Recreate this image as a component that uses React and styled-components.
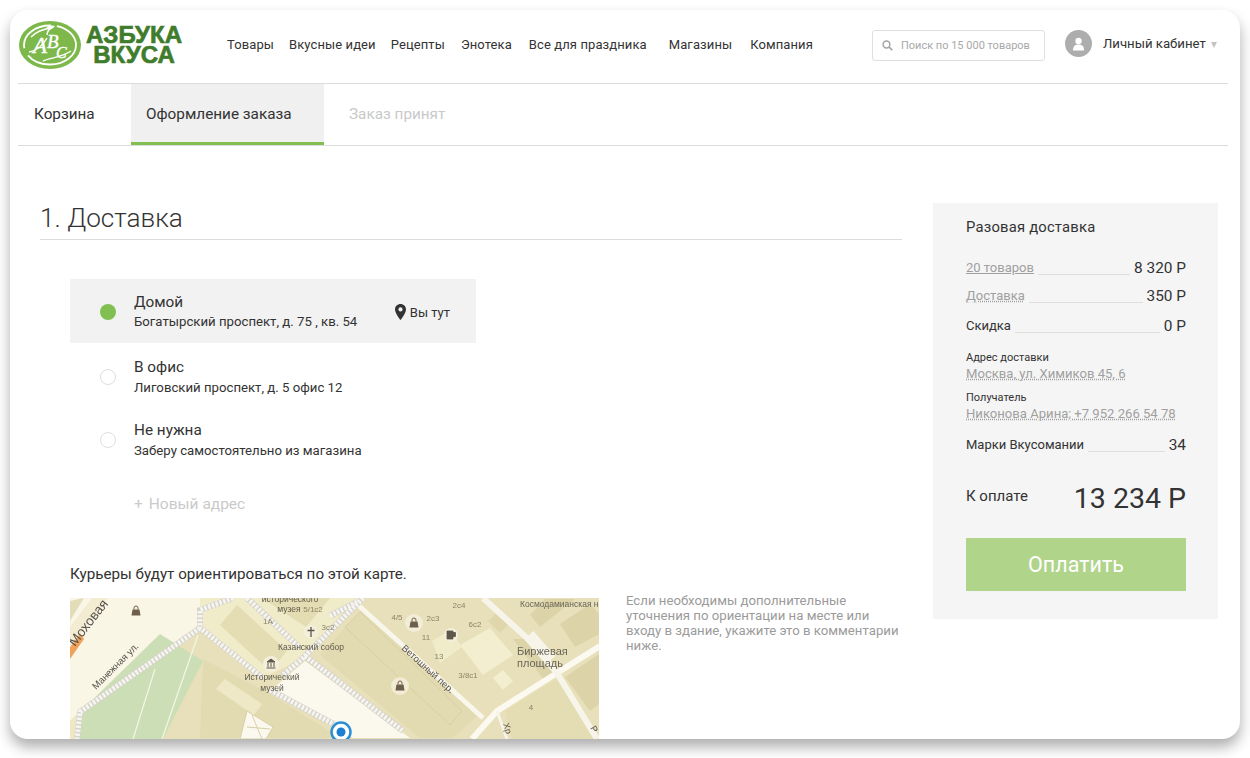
import React from 'react';
import styled, { createGlobalStyle } from 'styled-components';

const Global = createGlobalStyle`
	html, body {
		margin: 0;
		height: 100%;
		overflow: hidden;
		background: #fff;
	}
	body {
		font-family: Roboto, "Liberation Sans", sans-serif;
		color: #333;
	}
	#root {
		padding: 10px 10px 0;
	}
`;

const Window = styled.div`
	height: 729px;
	overflow: hidden;
	padding: 0 12px 0 8px;
	box-sizing: border-box;
	background: #fff;
	border-radius: 18px;
	box-shadow: 0 8px 14px rgba(0, 0, 0, 0.32);
`;

const Header = styled.header`
	display: flex;
	align-items: center;
	box-sizing: border-box;
	height: 74px;
	padding-bottom: 6px;
	border-bottom: 1px solid #dcdcdc;
`;

const Logo = styled.div`
	display: flex;
	flex: none;
	align-items: center;
	width: 208px;
	margin: 2px 0 0 1px;
`;

const Wordmark = styled.div`
	margin: 1px 0 0 4px;
	width: 98px;
	text-align: center;
	font-family: "Liberation Sans", sans-serif;
	font-weight: 700;
	font-size: 24px;
	line-height: 20px;
	color: #3f7d2c;
	-webkit-text-stroke: 0.7px #3f7d2c;
`;

const Nav = styled.nav`
	display: flex;
	flex: none;
	padding-top: 1px;
	font-size: 13px;
	letter-spacing: 0.1px;
	color: #333;
`;

const NavItem = styled.a`
	margin-right: ${props => props.$gap}px;
	white-space: nowrap;
`;

const Search = styled.div`
	display: flex;
	flex: none;
	align-items: center;
	width: 173px;
	height: 31px;
	margin: 3px 0 0 59px;
	padding-left: 9px;
	box-sizing: border-box;
	border: 1px solid #dfdfdf;
	border-radius: 3px;
	color: #a8a8a8;
	font-size: 11px;
	white-space: nowrap;
	svg {
		margin-right: 8px;
		flex: none;
	}
`;

const Account = styled.div`
	display: flex;
	flex: none;
	align-items: center;
	margin-left: 20px;
	font-size: 13.2px;
	white-space: nowrap;
`;

const Avatar = styled.span`
	display: flex;
	width: 27px;
	height: 27px;
	margin-right: 11px;
	border-radius: 50%;
	background: #adadad;
	align-items: center;
	justify-content: center;
`;

const Caret = styled.span`
	width: 0;
	height: 0;
	margin: 2px 0 0 5px;
	border-left: 3px solid transparent;
	border-right: 3px solid transparent;
	border-top: 6px solid #c4c4c4;
`;

const Tabs = styled.div`
	display: flex;
	height: 61px;
	border-bottom: 1px solid #dcdcdc;
`;

const Tab = styled.div`
	display: flex;
	align-items: center;
	box-sizing: border-box;
	height: 61px;
	width: ${props => props.$width}px;
	padding: 2px 0 0 ${props => props.$pad}px;
	font-size: 15.3px;
	color: ${props => (props.$muted ? '#c9c9c9' : '#333')};
	background: ${props => (props.$active ? '#f0f0f0' : 'transparent')};
	border-bottom: 3px solid ${props => (props.$active ? '#82bf52' : 'transparent')};
`;

const Main = styled.main`
	display: flex;
	align-items: flex-start;
	padding: 57px 0 0 22px;
`;

const Content = styled.section`
	width: 862px;
`;

const Title = styled.h1`
	height: 36px;
	margin: 0;
	border-bottom: 1px solid #dcdcdc;
	font-weight: 300;
	font-size: 26.2px;
	line-height: 30px;
	color: #333;
`;

const Addresses = styled.div`
	width: 406px;
	margin: 39px 0 0 30px;
`;

const AddressRow = styled.div`
	display: flex;
	align-items: center;
	box-sizing: border-box;
	height: ${props => props.$height}px;
	padding: 0 26px 0 30px;
	background: ${props => (props.$active ? '#f2f2f2' : 'transparent')};
`;

const Radio = styled.span`
	flex: none;
	box-sizing: border-box;
	width: 16px;
	height: 16px;
	margin: 2px 18px 0 0;
	border-radius: 50%;
	background: ${props => (props.$on ? '#82bf52' : '#fff')};
	border: ${props => (props.$on ? '0' : '1.5px solid #dedede')};
`;

const AddressText = styled.div`
	flex: 1;
	padding-top: ${props => props.$top}px;
`;

const AddressName = styled.div`
	font-size: 15.3px;
	line-height: 18px;
`;

const AddressLine = styled.div`
	font-size: 13.2px;
	line-height: 18px;
	margin-top: ${props => props.$gap}px;
`;

const YouHere = styled.div`
	display: flex;
	align-items: center;
	margin-top: 3px;
	font-size: 13px;
	svg {
		margin: -2px 4px 0 0;
	}
`;

const NewAddress = styled.div`
	margin: 25px 0 0 94px;
	font-size: 15.5px;
	line-height: 18px;
	color: #cacaca;
	span {
		margin-right: 6px;
	}
`;

const MapCaption = styled.p`
	margin: 52px 0 0 30px;
	font-size: 15.2px;
	line-height: 18px;
`;

const MapRow = styled.div`
	display: flex;
	margin: 15px 0 0 30px;
`;

const MapFrame = styled.div`
	flex: none;
	width: 529px;
	height: 160px;
	overflow: hidden;
	svg {
		display: block;
		filter: blur(0.5px);
	}
`;

const MapNote = styled.p`
	width: 276px;
	margin: -5px 0 0 27px;
	font-size: 13.2px;
	line-height: 15px;
	color: #9b9b9b;
`;

const Summary = styled.aside`
	flex: none;
	box-sizing: border-box;
	width: 285px;
	height: 416px;
	margin-left: 31px;
	padding: 15px 32px 0 33px;
	background: #f5f5f5;
`;

const SummaryTitle = styled.div`
	font-size: 14.8px;
	line-height: 18px;
	letter-spacing: 0.2px;
`;

const Line = styled.div`
	display: flex;
	align-items: flex-end;
	height: 18px;
	margin-top: ${props => props.$top}px;
`;

const LineLabel = styled.span`
	font-size: 13px;
	line-height: 18px;
	white-space: nowrap;
	color: ${props => (props.$link ? '#a0a0a0' : '#333')};
	text-decoration: ${props => (props.$link ? 'underline' : 'none')};
	text-decoration-style: ${props => props.$link || 'solid'};
`;

const Leader = styled.span`
	flex: 1;
	margin: 0 4px 2px 4px;
	border-bottom: 1px solid #dedede;
`;

const LineValue = styled.span`
	font-size: 15.4px;
	line-height: 18px;
	white-space: nowrap;
`;

const InfoLabel = styled.div`
	margin-top: ${props => props.$top}px;
	font-size: 11px;
	line-height: 14px;
`;

const InfoValue = styled.div`
	margin-top: 1px;
	font-size: 13.1px;
	line-height: 15px;
	color: #a0a0a0;
	white-space: nowrap;
	text-decoration: underline dotted;
`;

const Total = styled.div`
	display: flex;
	align-items: center;
	justify-content: space-between;
	height: 36px;
	margin-top: 27px;
`;

const TotalLabel = styled.span`
	font-size: 15px;
	margin-top: -7px;
`;

const TotalValue = styled.span`
	font-size: 28.5px;
	line-height: 36px;
`;

const PayButton = styled.button`
	display: block;
	width: 220px;
	height: 53px;
	margin-top: 21px;
	padding: 0;
	border: 0;
	background: #b0d48a;
	color: #fff;
	font: inherit;
	font-size: 21.5px;
`;

const LogoMark = () => (
	<svg width="62" height="48" viewBox="0 0 62 48">
		<ellipse cx="31" cy="24" rx="31" ry="24" fill="#7cb84a" />
		<ellipse cx="31" cy="24" rx="26" ry="19.5" fill="none" stroke="#fff" strokeWidth="1.8" strokeDasharray="60 8 40 6" />
		<path d="M10 31c8-1 14-7 18-14M34 6c-4 2-6 5-6 8M24 40c6-3 20-4 28-10M12 16c6-6 12-8 20-9" fill="none" stroke="#fff" strokeWidth="1.4" />
		<path d="M27 7c3-3 6-3 9-2-2 3-5 4-9 2z" fill="#fff" />
		<text x="14" y="32" fill="#fff" stroke="#fff" strokeWidth="0.4" fontFamily="Liberation Serif" fontStyle="italic" fontSize="23">А</text>
		<text x="28" y="27" fill="#fff" stroke="#fff" strokeWidth="0.4" fontFamily="Liberation Serif" fontStyle="italic" fontSize="19">В</text>
		<text x="37" y="37" fill="#fff" stroke="#fff" strokeWidth="0.4" fontFamily="Liberation Serif" fontStyle="italic" fontSize="16">С</text>
	</svg>
);

const SearchIcon = () => (
	<svg width="11" height="11" viewBox="0 0 11 11">
		<circle cx="4.5" cy="4.5" r="3.4" fill="none" stroke="#a5a5a5" strokeWidth="1.5" />
		<path d="M7 7l3.2 3.2" stroke="#a5a5a5" strokeWidth="1.7" />
	</svg>
);

const UserIcon = () => (
	<svg width="13" height="14" viewBox="0 0 13 14">
		<circle cx="6.5" cy="4" r="3.2" fill="#fff" />
		<path d="M1 13.5c0-4 1.500-6 5.500-6s5.500 2 5.500 6z" fill="#fff" />
	</svg>
);

const PinIcon = () => (
	<svg width="11" height="16" viewBox="0 0 11 16">
		<path d="M5.500 0C2.400 0 0 2.400 0 5.400 0 9 5.500 16 5.500 16S11 9 11 5.400C11 2.400 8.600 0 5.500 0zm0 7.500a2.100 2.100 0 1 1 0-4.200 2.100 2.100 0 0 1 0 4.200z" fill="#333" />
	</svg>
);

const Bag = ({ x, y, halo }) => (
	<g transform={`translate(${x} ${y})`}>
		{halo && <circle r="9" fill="#f4efdc" opacity="0.85" />}
		<path d="M-4.500 4.500l1-6h7l1 6z" fill="#6e5f4b" />
		<path d="M-2-1.500v-1.500a2 2 0 0 1 4 0v1.500" fill="none" stroke="#6e5f4b" strokeWidth="1" />
	</g>
);

const HOUSE_NUMBERS = [
	['5/1с2', 313, 613],
	['1А', 268, 625],
	['3с2', 328, 631],
	['4/5', 397, 621],
	['2с3', 433, 622],
	['2с4', 459, 609],
	['6с2', 475, 628],
	['11', 426, 641],
	['13', 439, 660],
	['3/8с1', 468, 679],
	['4', 531, 711],
];

const PEDESTRIAN_PATHS = [
	'M233 599L200 611V629L263 679',
	'M200 629L80 713L77 740',
	'M247 599L300 649',
	'M363 599L303 659L282 677',
	'M270 691L337 727',
	'M305 657L403 732',
	'M330 617L357 603',
];

// viewBox is in page pixels so features can be read straight off the reference
const CityMap = () => (
	<svg width="529" height="160" viewBox="70 599 529 160" fontFamily="Liberation Sans, sans-serif">
		<rect x="70" y="599" width="529" height="160" fill="#e7e0ba" />
		{/* ground west of the square */}
		<path d="M70 599H200V629L80 713L70 722Z" fill="#f9f6e6" />
		<path d="M70 722L80 713L77 740H70Z" fill="#efe8c4" />
		<path d="M70 660L84 640L80 634L70 648Z" fill="#f0a25a" />
		<path d="M70 648L108 599H92L70 628Z" fill="#f3ecd2" />
		<path d="M70 602L84 599L70 622Z" fill="#e3dcb8" />
		{/* museum ground and building */}
		<path d="M200 599H310L363 599L303 659L263 679L200 629Z" fill="#f0ebc9" />
		<path d="M220 626L237 606L287 652L270 672Z" fill="#e4dcb2" />
		<path d="M262 599H330L306 628Z" fill="#e4dcb2" />
		{/* park */}
		<path d="M160 635L203 662L163 740H77L80 713Z" fill="#cbdeb6" />
		<path d="M155 670L133 740M198 636L162 740" stroke="#f4f6e8" strokeWidth="1.2" fill="none" />
		{/* block around the star court */}
		<path d="M203 660L270 695L340 739H200Z" fill="#e2dab0" />
		<path d="M216 690L225 680L262 705L254 716Z" fill="#eee8c6" />
		<path d="M247 712L273 728L266 740H240Z" fill="#fbf9ef" stroke="#d8cfa6" />
		<path d="M252 716L262 740M247 728L270 730" stroke="#d8cfa6" fill="none" />
		{/* cream square */}
		<path d="M305 662L410 739H353L270 692Z" fill="#fbf9ee" />
		{/* large block */}
		<path d="M320 656L363 609L477 717L453 739H420Z" fill="#e2dab0" />
		<path d="M345 628L360 613L462 712L450 726Z" fill="none" stroke="#d8cfa6" />
		{/* squares north of Vetoshny */}
		<path d="M460 646L490 629L513 656L483 676Z" fill="#f3eecf" />
		<path d="M432 642L450 631L462 648L440 664Z" fill="#f0ebc8" />
		<path d="M493 679L503 671L513 682L503 691Z" fill="#f3eecf" />
		<path d="M488 622L498 612L510 624L500 634Z" fill="#dfd7ab" />
		<path d="M513 640L525 640L560 672L545 682Z" fill="#dcd4a8" />
		<path d="M545 600H575L540 628L530 616Z" fill="#dcd4a8" />
		<path d="M560 625L590 605L599 615V635L575 648Z" fill="#dcd4a8" />
		<path d="M565 678L599 655V705L590 712Z" fill="#dcd4a8" />
		<path d="M505 712L556 680L595 740H512Z" fill="#e4dcb3" />
		{/* streets */}
		<path d="M357 605L483 719" stroke="#f9f7ec" strokeWidth="5" fill="none" />
		<path d="M472 740L497 712L557 674L600 647" stroke="#fbf9f0" strokeWidth="6" fill="none" />
		<path d="M483 599L527 639L557 674L597 740" stroke="#f7f5ea" strokeWidth="6" fill="none" />
		<path d="M497 712L507 740" stroke="#f7f5ea" strokeWidth="3" fill="none" />
		<path d="M530 635L552 660" stroke="#f7f5ea" strokeWidth="9" fill="none" />
		{/* pedestrian zones */}
		<g fill="none" stroke="#d6d3c8" strokeWidth="6">
			{PEDESTRIAN_PATHS.map(d => <path key={d} d={d} />)}
		</g>
		<g fill="none" stroke="#f6f5f2" strokeWidth="5" strokeDasharray="2.500 1.500">
			{PEDESTRIAN_PATHS.map(d => <path key={d} d={d} />)}
		</g>
		<Bag x={136} y={612} />
		<Bag x={414} y={624} halo />
		<Bag x={400} y={687} halo />
		<circle cx="311" cy="633" r="7" fill="#f4efdc" />
		<path d="M311 628v10M307.500 631.500h7" stroke="#5e5648" strokeWidth="1.3" />
		<circle cx="271" cy="665" r="8" fill="#f4efdc" />
		<path d="M267 663h8l-4-3zM268 664v4M271 664v4M274 664v4M266.500 669h9" stroke="#5e5648" strokeWidth="1" fill="#5e5648" />
		<circle cx="451" cy="636" r="7" fill="#f4efdc" />
		<path d="M447 632h6v8h-6zM453 633.500h2.500v4h-2.500" fill="#5e5648" stroke="#5e5648" strokeWidth="0.8" />
		<g fill="#8a8468" fontSize="8" textAnchor="middle">
			{HOUSE_NUMBERS.map(([label, x, y]) => (
				<text key={label} x={x} y={y}>{label}</text>
			))}
		</g>
		<g fill="#5f5a4c" fontSize="8.500" textAnchor="middle">
			<text x="290" y="603">исторического</text>
			<text x="289" y="613">музея</text>
			<text x="272" y="681">Исторический</text>
			<text x="272" y="692">музей</text>
			<text x="311" y="651">Казанский собор</text>
		</g>
		<text x="75" y="648" transform="rotate(-52 75 648)" fill="#55504a" fontSize="13.5">Моховая</text>
		<text x="96" y="691" transform="rotate(-45 96 691)" fill="#55504a" fontSize="9.5">Манежная ул.</text>
		<text x="401" y="650" transform="rotate(42 401 650)" fill="#55504a" fontSize="9.500">Ветошный пер.</text>
		<text x="517" y="656" fill="#6a6558" fontSize="11">Биржевая</text>
		<text x="517" y="668" fill="#6a6558" fontSize="11">площадь</text>
		<text x="520" y="608" fill="#6a6558" fontSize="8.500">Космодамианская н</text>
		<text x="503" y="725" transform="rotate(72 503 725)" fill="#55504a" fontSize="9">Хр</text>
		<text x="590" y="729" transform="rotate(60 590 729)" fill="#55504a" fontSize="9">Р</text>
		<circle cx="341" cy="733" r="9.500" fill="#fff" stroke="#2b8fd6" strokeWidth="2.500" />
		<circle cx="341" cy="733" r="4.500" fill="#1f7fd0" />
	</svg>
);

const NAV_ITEMS = [
	['Товары', 15],
	['Вкусные идеи', 15],
	['Рецепты', 16],
	['Энотека', 17],
	['Все для праздника', 22],
	['Магазины', 18],
	['Компания', 0],
];

const App = () => (
	<>
		<Global />
		<Window>
			<Header>
				<Logo>
					<LogoMark />
					<Wordmark>АЗБУКА<br />ВКУСА</Wordmark>
				</Logo>
				<Nav>
					{NAV_ITEMS.map(([label, gap]) => (
						<NavItem key={label} $gap={gap}>{label}</NavItem>
					))}
				</Nav>
				<Search>
					<SearchIcon />
					Поиск по 15 000 товаров
				</Search>
				<Account>
					<Avatar><UserIcon /></Avatar>
					Личный кабинет
					<Caret />
				</Account>
			</Header>
			<Tabs>
				<Tab $width={113} $pad={16}>Корзина</Tab>
				<Tab $width={193} $pad={15} $active>Оформление заказа</Tab>
				<Tab $width={200} $pad={25} $muted>Заказ принят</Tab>
			</Tabs>
			<Main>
				<Content>
					<Title>1. Доставка</Title>
					<Addresses>
						<AddressRow $active $height={64}>
							<Radio $on />
							<AddressText $top={1}>
								<AddressName>Домой</AddressName>
								<AddressLine $gap={2}>Богатырский проспект, д. 75 , кв. 54</AddressLine>
							</AddressText>
							<YouHere><PinIcon />Вы тут</YouHere>
						</AddressRow>
						<AddressRow $height={65}>
							<Radio />
							<AddressText $top={3}>
								<AddressName>В офис</AddressName>
								<AddressLine $gap={3}>Лиговский проспект, д. 5 офис 12</AddressLine>
							</AddressText>
						</AddressRow>
						<AddressRow $height={62}>
							<Radio />
							<AddressText $top={2}>
								<AddressName>Не нужна</AddressName>
								<AddressLine $gap={3}>Заберу самостоятельно из магазина</AddressLine>
							</AddressText>
						</AddressRow>
					</Addresses>
					<NewAddress><span>+</span>Новый адрес</NewAddress>
					<MapCaption>Курьеры будут ориентироваться по этой карте.</MapCaption>
					<MapRow>
						<MapFrame><CityMap /></MapFrame>
						<MapNote>Если необходимы дополнительные уточнения по ориентации на месте или входу в здание, укажите это в комментарии ниже.</MapNote>
					</MapRow>
				</Content>
				<Summary>
					<SummaryTitle>Разовая доставка</SummaryTitle>
					<Line $top={23}>
						<LineLabel $link="solid">20 товаров</LineLabel>
						<Leader />
						<LineValue>8 320 Р</LineValue>
					</Line>
					<Line $top={10}>
						<LineLabel $link="dotted">Доставка</LineLabel>
						<Leader />
						<LineValue>350 Р</LineValue>
					</Line>
					<Line $top={12}>
						<LineLabel>Скидка</LineLabel>
						<Leader />
						<LineValue>0 Р</LineValue>
					</Line>
					<InfoLabel $top={16}>Адрес доставки</InfoLabel>
					<InfoValue>Москва, ул. Химиков 45, 6</InfoValue>
					<InfoLabel $top={10}>Получатель</InfoLabel>
					<InfoValue>Никонова Арина; +7 952 266 54 78</InfoValue>
					<Line $top={15}>
						<LineLabel>Марки Вкусомании</LineLabel>
						<Leader />
						<LineValue>34</LineValue>
					</Line>
					<Total>
						<TotalLabel>К оплате</TotalLabel>
						<TotalValue>13 234 Р</TotalValue>
					</Total>
					<PayButton>Оплатить</PayButton>
				</Summary>
			</Main>
		</Window>
	</>
);

export default App;
